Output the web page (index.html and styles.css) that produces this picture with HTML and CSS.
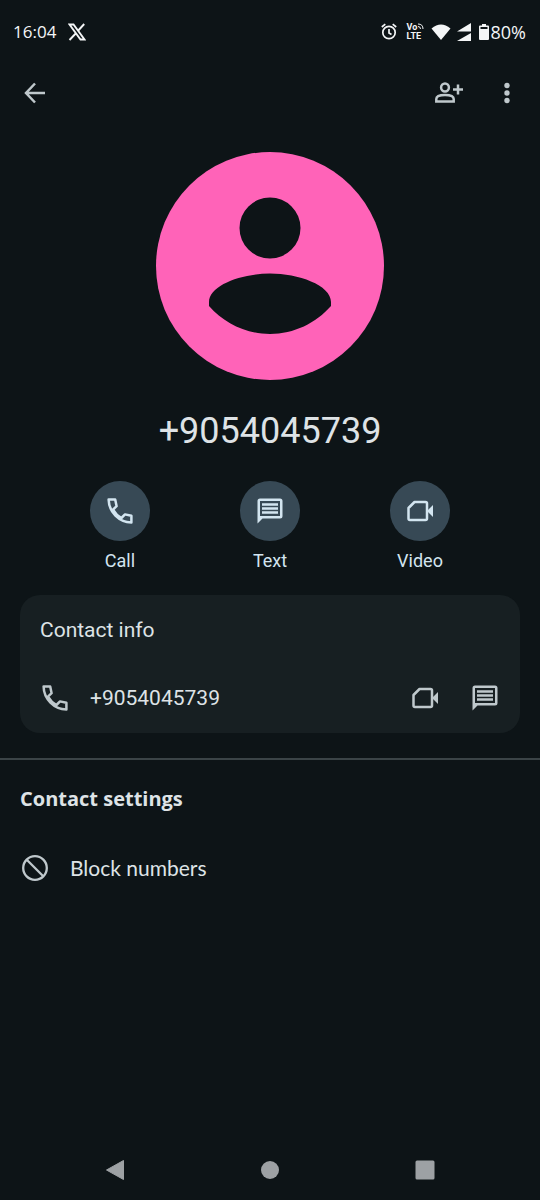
FILE: index.html
```html
<!DOCTYPE html>
<html lang="en">
<head>
<meta charset="utf-8">
<meta name="viewport" content="width=device-width, initial-scale=1">
<title>Contact</title>
<link rel="stylesheet" href="styles.css">
</head>
<body>
<svg class="defs" aria-hidden="true">
  <symbol id="call" viewBox="0 0 30 30">
    <path d="M3.600 3.600H10.200L11.600 10.200L8 13.600C10 17.200 12.800 20 16.400 22L20 18.400L26.400 19.800V26.400C14 26.200 3.800 16 3.600 3.600Z" fill="none" stroke="currentColor" stroke-width="2.500" stroke-linejoin="round"/>
  </symbol>
  <symbol id="chat" viewBox="0 0 30 30">
    <path fill="currentColor" fill-rule="evenodd" d="M5 2.500H25A2.500 2.500 0 0 1 27.500 5V20A2.500 2.500 0 0 1 25 22.500H7.500L2.500 27.500V5A2.500 2.500 0 0 1 5 2.500ZM5 5V20H25V5Z"/>
    <path stroke="currentColor" stroke-width="2.300" d="M7 8.500H23M7 12.500H23M7 16.500H23"/>
  </symbol>
  <symbol id="video" viewBox="0 0 30 30">
    <path d="M9.500 6H20.500Q22 6 22 7.500V22.500Q22 24 20.500 24H5Q3.500 24 3.500 22.500V12Z" fill="none" stroke="currentColor" stroke-width="2.500" stroke-linejoin="round"/>
    <path fill="currentColor" d="M22 15L28 9V21Z"/>
  </symbol>
</svg>

<div class="screen">
  <div class="status">
    <span class="time">16:04</span>
    <svg class="x-logo" viewBox="0 0 18 18" aria-label="X"><path d="M1.500 1.500H5.500L16.500 16.500H12.500ZM16.200 1L10.300 7.500M7.700 10.500L1.500 17" fill="none" stroke="currentColor" stroke-width="1.900"/></svg>
    <div class="indicators">
      <svg class="alarm" viewBox="0 0 16 18"><g fill="none" stroke="currentColor" stroke-width="1.700"><circle cx="8" cy="9.500" r="6.200"/><path d="M8 6V10L10.500 11.500M0.800 4L4.300 1.200M15.200 4L11.700 1.200"/></g></svg>
      <span class="volte"><span class="vo">Vo<svg viewBox="0 0 7 7"><path d="M1 1Q6 1 6 6M1 3.500Q3.500 3.500 3.500 6" fill="none" stroke="currentColor"/></svg></span><span>LTE</span></span>
      <svg class="wifi" viewBox="0 0 20 16"><path fill="currentColor" d="M0.500 4.500Q10-3.500 19.500 4.500L10 16Z"/></svg>
      <svg class="signal" viewBox="0 0 14 18"><path fill="currentColor" d="M14 0V8.500H0ZM14 10V18H0Z"/><path d="M3 13L8 9.500" stroke="#0d1417" stroke-width="1"/></svg>
      <svg class="battery" viewBox="0 0 10 16"><path fill="currentColor" fill-rule="evenodd" d="M3 0H7V1.500H9Q10 1.500 10 2.500V15Q10 16 9 16H1Q0 16 0 15V2.500Q0 1.500 1 1.500H3ZM1.500 3V5H8.500V3Z"/></svg>
      <span class="percent">80%</span>
    </div>
  </div>

  <header class="toolbar">
    <button class="icon-button" aria-label="Back"><svg class="icon" viewBox="0 0 30 30"><path d="M25 15H6.500M15 5.500L6 15L15 24.500" fill="none" stroke="currentColor" stroke-width="2.500"/></svg></button>
    <div class="toolbar-actions">
      <button class="icon-button" aria-label="Add contact"><svg class="icon" viewBox="0 0 30 30"><g fill="none" stroke="currentColor" stroke-width="2.500"><circle cx="11" cy="9.500" r="3.900"/><path d="M2.300 23.500V21Q2.300 17 11 17T19.700 21V23.500ZM24 6.500V16.500M19 11.500H29"/></g></svg></button>
      <button class="icon-button" aria-label="More options"><svg class="icon" viewBox="0 0 30 30"><g fill="currentColor"><circle cx="15" cy="7.500" r="2.700"/><circle cx="15" cy="15" r="2.700"/><circle cx="15" cy="22.500" r="2.700"/></g></svg></button>
    </div>
  </header>

  <main>
    <section class="profile">
      <svg class="avatar" viewBox="0 0 228 228" aria-hidden="true">
        <circle cx="114" cy="114" r="114" fill="#ff63b8"/>
        <path fill="#0d1417" d="M114 45.500A30.500 30.500 0 1 1 114 106.500A30.500 30.500 0 1 1 114 45.500ZM53 154V150C53 133 86 121.500 114 121.500S175 133 175 150V154C160 171 138 182 114 182S68 171 53 154Z"/>
      </svg>
      <h1 class="number">+9054045739</h1>
      <div class="actions">
        <button class="action"><span class="disc"><svg class="icon"><use href="#call"/></svg></span>Call</button>
        <button class="action"><span class="disc"><svg class="icon"><use href="#chat"/></svg></span>Text</button>
        <button class="action"><span class="disc"><svg class="icon"><use href="#video"/></svg></span>Video</button>
      </div>
    </section>

    <section class="card">
      <h2 class="card-title">Contact info</h2>
      <div class="phone-row">
        <svg class="icon"><use href="#call"/></svg>
        <span class="phone">+9054045739</span>
        <button class="row-button" aria-label="Video call"><svg class="icon"><use href="#video"/></svg></button>
        <button class="row-button" aria-label="Send message"><svg class="icon"><use href="#chat"/></svg></button>
      </div>
    </section>

    <section class="settings">
      <h2 class="settings-title">Contact settings</h2>
      <button class="setting"><svg class="icon" viewBox="0 0 30 30"><g fill="none" stroke="currentColor" stroke-width="2.300"><circle cx="15" cy="15" r="11.800"/><path d="M7 7L23 23"/></g></svg>Block numbers</button>
    </section>
  </main>

  <nav class="navbar">
    <button class="nav-button" aria-label="Back"><svg viewBox="0 0 20 20"><path fill="currentColor" stroke="currentColor" stroke-linejoin="round" d="M1.500 10L18.500 0.500V19.500Z"/></svg></button>
    <button class="nav-button" aria-label="Home"><svg viewBox="0 0 20 20"><circle cx="10" cy="10" r="9" fill="currentColor"/></svg></button>
    <button class="nav-button" aria-label="Recent apps"><svg viewBox="0 0 20 20"><rect x="0.500" y="0.500" width="19" height="19" rx="1.500" fill="currentColor"/></svg></button>
  </nav>
</div>
</body>
</html>
```
FILE: styles.css
```css
* { box-sizing: border-box; }

body {
  margin: 0;
  background: #0d1417;
  color: #dee3e6;
  font-family: Roboto, "Liberation Sans", sans-serif;
  font-size: 21px;
  line-height: 24px;
}

button {
  padding: 0;
  border: 0;
  background: none;
  color: inherit;
  font: inherit;
  cursor: pointer;
}

h1, h2 { margin: 0; }
svg { display: block; flex: none; }
.defs { position: absolute; width: 0; height: 0; }
.icon { width: 30px; height: 30px; }

.screen {
  display: flex;
  flex-direction: column;
  min-height: 100vh;
}

.status {
  display: flex;
  align-items: center;
  height: 63px;
  padding: 0 14px 0 13px;
  color: #f4f6f7;
  font-family: "Open Sans", sans-serif;
  font-size: 17px;
  font-weight: 500;
}

.x-logo { width: 18px; height: 18px; margin-left: 12px; }

.indicators {
  display: flex;
  align-items: center;
  margin-left: auto;
}

.alarm { width: 16px; height: 18px; }

.volte {
  display: flex;
  flex-direction: column;
  width: 18px;
  margin: 0 6px 0 10px;
  font-family: Roboto, sans-serif;
  font-size: 9px;
  font-weight: 700;
  line-height: 9px;
}

.vo { display: flex; }
.vo svg { width: 7px; height: 7px; }
.wifi { width: 20px; height: 16px; }
.signal { width: 14px; height: 18px; margin: 0 8px 0 6px; }
.battery { width: 10px; height: 16px; }
.percent { margin-left: 2px; font-size: 18px; }

.toolbar {
  display: flex;
  justify-content: space-between;
  height: 60px;
  padding: 0 8px 0 10px;
  color: #bfc8cc;
}

.toolbar-actions { display: flex; gap: 8px; }

.icon-button {
  display: grid;
  place-items: center;
  width: 50px;
  height: 60px;
}

.profile {
  display: flex;
  flex-direction: column;
  align-items: center;
  padding: 29px 45px 0;
}

.avatar { width: 228px; height: 228px; }

.number {
  margin-top: 29px;
  font-size: 36px;
  font-weight: 400;
  line-height: 44px;
}

.actions {
  display: flex;
  align-self: stretch;
  margin-top: 28px;
}

.action {
  display: flex;
  flex: 1;
  flex-direction: column;
  align-items: center;
  gap: 8px;
  color: #d3e5f0;
  font-size: 18px;
}

.disc {
  display: grid;
  place-items: center;
  width: 60px;
  height: 60px;
  border-radius: 50%;
  background: #374955;
}

.card {
  margin: 22px 20px 0;
  padding: 23px 20px 20px;
  border-radius: 20px;
  background: #171f22;
}

.card-title { font-size: 21px; font-weight: 400; }

.phone-row {
  display: flex;
  align-items: center;
  margin-top: 41px;
  color: #bfc8cc;
}

.phone { flex: 1; margin-left: 20px; color: #dee3e6; }
.row-button { margin-left: 30px; }

.settings {
  margin-top: 25px;
  padding: 27px 20px 0;
  border-top: 2px solid #3b4447;
  font-family: Lato, sans-serif;
}

.settings-title {
  font-family: "Open Sans", sans-serif;
  font-size: 20px;
  font-weight: 700;
}

.setting {
  display: flex;
  align-items: center;
  gap: 20px;
  width: 100%;
  margin-top: 42px;
}

.setting .icon { color: #bfc8cc; }

.navbar {
  display: flex;
  justify-content: space-around;
  margin-top: auto;
  padding: 0 37px;
  color: #9da1a4;
}

.nav-button {
  display: grid;
  place-items: center;
  width: 60px;
  height: 60px;
}

.nav-button svg { width: 20px; height: 20px; }
```
